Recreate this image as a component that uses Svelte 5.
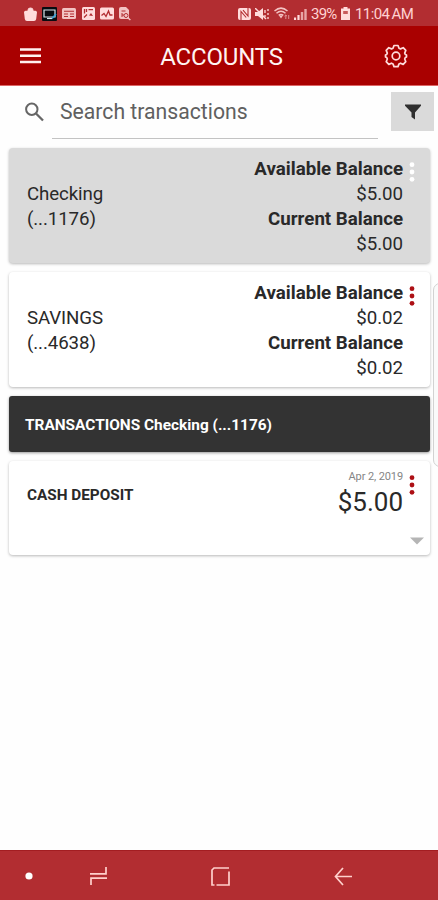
<script>
	const accounts = [
		{ name: 'Checking', number: '(...1176)', available: '$5.00', current: '$5.00', selected: true },
		{ name: 'SAVINGS', number: '(...4638)', available: '$0.02', current: '$0.02', selected: false },
	];

	let query = $state('');
</script>

{#snippet dots()}
	<button class="dots" type="button" aria-label="More options">
		<svg width="6" height="20" viewBox="0 0 6 20" fill="currentColor">
			<circle cx="3" cy="2.7" r="2.4" />
			<circle cx="3" cy="10" r="2.4" />
			<circle cx="3" cy="17.3" r="2.4" />
		</svg>
	</button>
{/snippet}

<div class="screen">
	<div class="status">
		<div class="status-left">
			<svg width="13" height="14" viewBox="0 0 13 14">
				<path d="M1.5 3.8h10q1.3 0 1.5 1.5l-.8 6.7q-.3 2-2.2 2H3q-1.9 0-2.2-2L0 5.3q.2-1.5 1.5-1.5z" fill="#ffdcdc" />
				<path d="M4 4.5V3q0-2 2.5-2T9 3v1.5" fill="#ffdcdc" stroke="#ffdcdc" />
			</svg>
			<svg width="15" height="14" viewBox="0 0 15 14">
				<rect width="15" height="14" rx="1" fill="#080b10" />
				<path d="M2 3h11v7H2z" fill="none" stroke="#d8e6ec" stroke-width="1.2" />
				<path d="M5 11.5h5" stroke="#d8e6ec" stroke-width="1.2" />
				<path d="M10 11.5 14 7" stroke="#3aa0d8" stroke-width="1.5" />
			</svg>
			<svg width="14" height="13" viewBox="0 0 14 13">
				<rect y="1" width="14" height="11" rx="1.5" fill="#f3c3c3" />
				<path d="M2 4.2h10M2 7h4M8 7h4M2 9.5h4M8 9.5h4" stroke="#b22d31" stroke-width="1.1" />
			</svg>
			<svg width="13" height="13" viewBox="0 0 13 13">
				<rect width="13" height="13" rx="1.5" fill="#ffdcdc" />
				<path d="M2.5 2v4.5M4.5 2v3M6.5 2.7H11M2 10.5l3-3" fill="none" stroke="#b22d31" stroke-width="1.3" />
				<path d="m7 8.5 2-2.5 2 3z" fill="#b22d31" />
			</svg>
			<svg width="14" height="13" viewBox="0 0 14 13">
				<rect y=".5" width="14" height="12" rx="1.5" fill="#ffdcdc" />
				<path d="M1.5 8.5 4 6.5l2 3L8.5 4l1.5 4h2.5" fill="none" stroke="#b22d31" stroke-width="1.3" />
			</svg>
			<svg width="12" height="14" viewBox="0 0 12 14">
				<path d="M0 2q0-2 2-2h5l3 3v9H2q-2 0-2-2z" fill="#f3c3c3" />
				<path d="M2.5 4h4M3 6v4M3 8h2" stroke="#b22d31" />
				<circle cx="7" cy="8.5" r="2" fill="#f3c3c3" stroke="#b22d31" />
				<path d="m8.5 10.5 2.9 2.5" stroke="#f3c3c3" stroke-width="1.4" />
			</svg>
		</div>
		<div class="status-right">
			<svg width="13" height="12" viewBox="0 0 13 12">
				<path d="M2 0h9q2 0 2 2v8q0 2-2 2H2q-2 0-2-2V2q0-2 2-2z" fill="#ffdcdc" />
				<path d="M3 12V3.5l5.2 6M5 2.2 10 8V0" fill="none" stroke="#b22d31" stroke-width="1.1" />
			</svg>
			<svg width="15" height="12" viewBox="0 0 15 12">
				<path d="M0 4h3l5-4v12L3 8H0z" fill="#ffdcdc" />
				<path d="m0 0 11 11" stroke="#ffdcdc" stroke-width="1.4" />
				<path d="M10 2v3M10 7v2M13 1v2M13 5v2M13 9v2" stroke="#ffdcdc" stroke-width="1.3" />
			</svg>
			<svg width="16" height="13" viewBox="0 0 16 13">
				<path d="M.5 4Q7-1.8 13.5 4M2.5 6.3Q7 2.2 11.5 6.3M4.7 8.4Q7 6.5 9.3 8.4" fill="none" stroke="#f3c3c3" stroke-width="1.5" />
				<path d="m5 8.5 2 3 2-3z" fill="#f3c3c3" />
				<path d="M11.8 12V8m-1.3 1.2L11.8 8 13 9.2M14.7 8v4" fill="none" stroke="#e29c9c" stroke-width=".9" />
			</svg>
			<svg width="13" height="12" viewBox="0 0 13 12">
				<path d="M1 9.5V12M4.5 7v5" stroke="#ffdcdc" stroke-width="2.2" />
				<path d="M8 4v8M11.5 1v11" stroke="#e8a5a5" stroke-width="2.4" />
			</svg>
			<span class="percent">39%</span>
			<svg width="9" height="13" viewBox="0 0 9 13">
				<path d="M2.5 0h4v1.5H9V13H0V1.5h2.5z" fill="#ffdcdc" />
				<path d="M2.2 4h4.6v3H2.2z" fill="#c85a5c" />
			</svg>
			<span class="time">11:04 AM</span>
		</div>
	</div>

	<header>
		<button type="button" aria-label="Menu">
			<svg width="21" height="16" viewBox="0 0 21 16" stroke="#fff1ef" stroke-width="2.4">
				<path d="M0 1.5h21M0 7.7h21M0 14h21" />
			</svg>
		</button>
		<h1>ACCOUNTS</h1>
		<button type="button" aria-label="Settings">
			<svg width="24" height="24" viewBox="0 0 24 24" fill="none" stroke="#ffdcdc" stroke-width="1.7" stroke-linejoin="round">
				<path d="M10 1.5h4l1 2.7 1.5.7 2.7-1.2 2.6 2.7-1.1 2.7.6 1.4 1.2.5v2l-1.2.5-.6 1.5 1.1 2.7-2.6 2.7-2.7-1.2-1.5.7-1 2.7h-4l-1-2.7-1.5-.7-2.7 1.2-2.6-2.7 1.1-2.7-.6-1.5-1.2-.5v-2l1.2-.5.6-1.4-1.1-2.7 2.6-2.7 2.7 1.2L9 4.2z" />
				<circle cx="12" cy="12" r="3.8" />
			</svg>
		</button>
	</header>

	<div class="search">
		<svg class="glass" width="20" height="20" viewBox="0 0 20 20" fill="none" stroke="#666" stroke-width="2">
			<circle cx="6.8" cy="7.2" r="5.7" />
			<path d="m11 11.5 7 7" stroke-width="2.3" />
		</svg>
		<input type="text" placeholder="Search transactions" bind:value={query} />
		<button class="filter" type="button" aria-label="Filter">
			<svg width="16" height="16" viewBox="0 0 16 16" fill="#2f2f2f">
				<path d="M0 .5h16v1.2L10 8.5v7L6.5 13V8.5L0 1.7z" />
			</svg>
		</button>
	</div>

	<main>
		{#each accounts as account}
			<section class="card account" class:selected={account.selected}>
				<div class="name">
					<span>{account.name}</span>
					<span>{account.number}</span>
				</div>
				<div class="balances">
					<b>Available Balance</b>
					<span>{account.available}</span>
					<b>Current Balance</b>
					<span>{account.current}</span>
				</div>
				{@render dots()}
			</section>
		{/each}

		<h2>TRANSACTIONS Checking (...1176)</h2>

		<section class="card transaction">
			<b>CASH DEPOSIT</b>
			<div class="amount">
				<small>Apr 2, 2019</small>
				<span>$5.00</span>
			</div>
			<div class="side">
				{@render dots()}
				<svg width="14" height="8" viewBox="0 0 14 8"><path d="M0 .5h14l-7 7z" fill="#b5b5b5" /></svg>
			</div>
		</section>
		<div class="edge-panel"></div>
	</main>

	<nav>
		<svg width="8" height="8" viewBox="0 0 8 8"><circle cx="4" cy="4" r="3.6" fill="#fff" /></svg>
		<svg class="recents" width="18" height="20" viewBox="0 0 18 20" fill="none" stroke="#ffd0cc" stroke-width="1.7">
			<path d="M0 7.8h16V1M17 12.2H1V19" />
		</svg>
		<svg class="home" width="19" height="19" viewBox="0 0 19 19" fill="none" stroke="#ffd0cc" stroke-width="1.7">
			<path d="M18 1H3L1 3v15h2.5M18 4.5V18H5.5" />
		</svg>
		<svg class="back" width="18" height="19" viewBox="0 0 18 19" fill="none" stroke="#ffd0cc" stroke-width="1.7">
			<path d="M9 1 1.5 9.5 9 18M1.5 9.5H18" />
		</svg>
	</nav>
</div>

<style>
	:global(body) {
		margin: 0;
		background: #fefefe;
	}
	.screen {
		display: flex;
		flex-direction: column;
		width: 438px;
		height: 900px;
		overflow: hidden;
		background: #fefefe;
		color: #292929;
		font-family: Roboto, sans-serif;
	}
	svg {
		display: block;
		flex: none;
	}
	button {
		display: flex;
		padding: 0;
		border: 0;
		background: none;
		color: inherit;
	}

	.status {
		display: flex;
		justify-content: space-between;
		box-sizing: border-box;
		height: 26px;
		padding: 1px 25px 0 24px;
		background: #b22d31;
		color: #ffd2d2;
		font-size: 15px;
	}
	.status-left,
	.status-right {
		display: flex;
		align-items: center;
		gap: 4px;
	}
	.status-left {
		gap: 5.2px;
	}
	.percent {
		width: 26px;
		letter-spacing: -0.8px;
	}
	.time {
		width: 58px;
		margin-left: 1px;
		white-space: nowrap;
		letter-spacing: -0.6px;
		word-spacing: -1px;
	}

	header {
		display: flex;
		align-items: center;
		justify-content: space-between;
		box-sizing: border-box;
		height: 60px;
		padding: 0 30px 0 20px;
		background: #a90000;
		border-bottom: 1px solid #d66;
	}
	h1 {
		margin: 2px 0 0 18px;
		color: #fff4f2;
		font-size: 24px;
		font-weight: 400;
		letter-spacing: -0.2px;
	}

	.search {
		display: flex;
		height: 61px;
		padding: 0 4px 0 25px;
	}
	.glass {
		margin: 16px 7px 0 0;
	}
	input {
		box-sizing: border-box;
		width: 326px;
		height: 53px;
		padding: 0 8px 1px;
		border: 0;
		border-bottom: 1px solid #c3c3c3;
		outline: 0;
		background: none;
		font: 21.2px Roboto, sans-serif;
	}
	input::placeholder {
		color: #606060;
		opacity: 1;
	}
	.filter {
		align-items: center;
		justify-content: center;
		width: 43px;
		height: 39px;
		margin: 6px 0 0 auto;
		background: #dadada;
	}

	main {
		position: relative;
		flex: 1;
		padding: 1px 8px 0 9px;
	}
	.card {
		display: flex;
		box-sizing: border-box;
		border-radius: 4px;
		background: #fff;
		box-shadow: 0 1px 3px rgba(0, 0, 0, 0.28);
	}
	.account {
		height: 115px;
		margin-bottom: 9px;
		padding: 9px 15px 0 18px;
		font-size: 18.7px;
		line-height: 25px;
	}
	.selected {
		background: #dadada;
	}
	.name,
	.balances,
	.amount {
		display: flex;
		flex-direction: column;
	}
	.name {
		padding-top: 25px;
		letter-spacing: -0.1px;
	}
	.balances {
		align-items: flex-end;
		margin-left: auto;
	}
	.balances span {
		letter-spacing: -0.05px;
	}
	b {
		font-weight: 700;
	}
	.dots {
		margin: 5px 0 auto 6px;
		color: #ad1015;
	}
	.selected .dots {
		color: #fff;
	}

	h2 {
		box-sizing: border-box;
		height: 56px;
		margin: 0 0 9px;
		padding: 1px 0 0 16px;
		border-radius: 3px;
		background: #333;
		box-shadow: 0 1px 3px rgba(0, 0, 0, 0.4);
		color: #fff;
		font-size: 15.4px;
		line-height: 56px;
	}
	.transaction {
		height: 94px;
		padding-left: 18px;
	}
	.transaction b {
		padding-top: 24px;
		font-size: 15.3px;
		line-height: 20px;
	}
	.amount {
		align-items: flex-end;
		margin-left: auto;
	}
	small {
		padding-top: 8px;
		color: #858585;
		font-size: 11px;
		line-height: 16px;
		letter-spacing: -0.1px;
	}
	.amount span {
		font-size: 26px;
		line-height: 34px;
	}
	.side {
		display: flex;
		flex-direction: column;
		width: 27px;
	}
	.side .dots {
		margin: 14px 0 0 6px;
	}
	.side > svg {
		margin: 42px 0 0 7px;
	}
	/* handle of the system edge panel, lies over the right side of the page */
	.edge-panel {
		position: absolute;
		top: 136px;
		right: -9px;
		width: 12px;
		height: 182px;
		border: 1px solid #d2d2d2;
		border-radius: 7px;
		background: #fafafa;
	}

	nav {
		display: flex;
		align-items: center;
		box-sizing: border-box;
		height: 50px;
		padding: 1px 0 0 25px;
		background: #b22d31;
		border-top: 1px solid #a31d21;
	}
	.recents {
		margin-left: 57px;
	}
	.home {
		margin-left: 103px;
	}
	.back {
		margin-left: 104px;
	}
</style>
